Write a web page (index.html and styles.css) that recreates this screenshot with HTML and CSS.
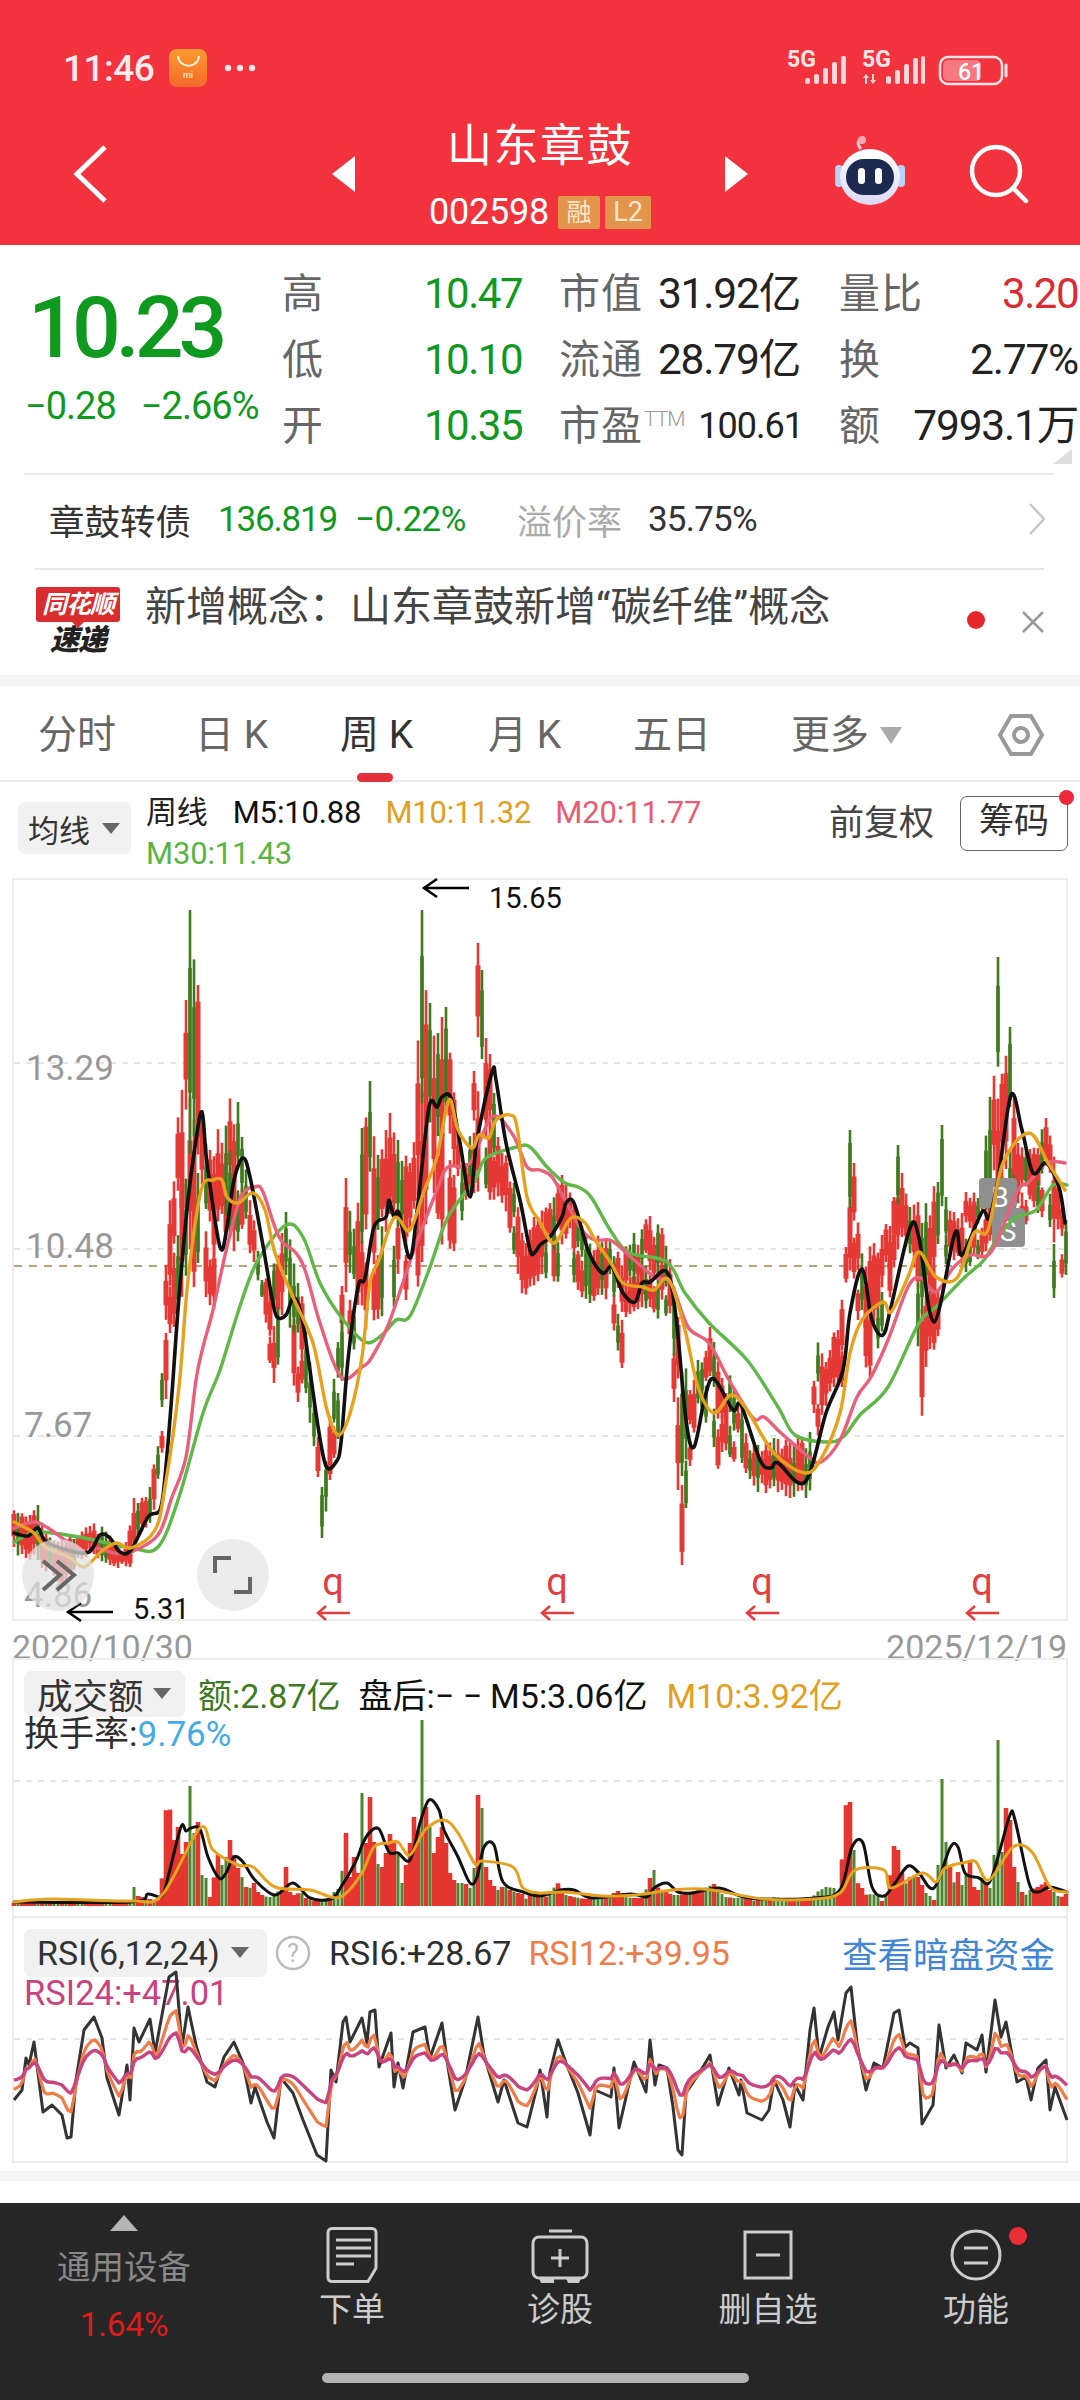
FILE: index.html
```html
<!DOCTYPE html>
<html lang="zh-CN">
<head>
<meta charset="utf-8">
<title>山东章鼓 002598</title>
<link rel="stylesheet" href="styles.css">
</head>
<body>
<div class="screen">
  <header class="header">
    <div class="status">
      <span class="time">11:46</span>
      <svg class="mi-icon" viewBox="0 0 38 38">
        <defs><linearGradient id="mi" x1="0" y1="0" x2="0" y2="1"><stop offset="0" stop-color="#fb9c30"/><stop offset="1" stop-color="#f5682b"/></linearGradient></defs>
        <rect width="38" height="38" rx="8" fill="url(#mi)"/>
        <path d="M9 7c1 13 20 13 21 0" fill="none" stroke="#fff3d8" stroke-width="2"/>
        <text x="19" y="29" class="mi-text">mi</text>
      </svg>
      <svg class="dots" viewBox="0 0 32 8"><circle cx="4" cy="4" r="3.200"/><circle cx="16" cy="4" r="3.200"/><circle cx="28" cy="4" r="3.200"/></svg>
      <svg class="sys" viewBox="0 0 224 36">
        <text x="0" y="17" class="net">5G</text>
        <g class="bars"><rect x="18" y="28" width="5" height="6" rx="2"/><rect x="27" y="24" width="5" height="10" rx="2"/><rect x="36" y="18" width="5" height="16" rx="2"/><rect x="45" y="12" width="5" height="22" rx="2"/><rect x="54" y="6" width="5" height="28" rx="2"/></g>
        <text x="75" y="17" class="net">5G</text>
        <g class="bars"><path d="M79 24l-3 4h2v6h2v-6h2zM86 34l3-4h-2v-6h-2v6h-2z"/><rect x="99" y="26" width="5" height="8" rx="2"/><rect x="108" y="20" width="5" height="14" rx="2"/><rect x="117" y="14" width="5" height="20" rx="2"/><rect x="126" y="8" width="5" height="26" rx="2"/><rect x="134" y="6" width="4" height="28" rx="2"/></g>
        <rect x="153" y="7" width="62" height="27" rx="8" class="batt"/>
        <rect x="156" y="10" width="38" height="21" rx="5" class="batt-fill"/>
        <text x="184" y="30" class="batt-text">61</text>
        <path d="M219 15v11" class="batt-cap"/>
      </svg>
    </div>
    <div class="nav">
      <svg class="back" viewBox="0 0 36 60"><path d="M33 3L5 30l28 27"/></svg>
      <div class="nav-center">
        <span class="tri-left"></span>
        <div class="titles">
          <div class="title">山东章鼓</div>
          <div class="code"><span class="code-num">002598</span><span class="tag tag-a">融</span><span class="tag tag-b">L2</span></div>
        </div>
        <span class="tri-right"></span>
      </div>
      <div class="nav-right">
        <svg class="robot" viewBox="0 0 72 72">
          <defs><linearGradient id="rb" x1="0" y1="0" x2="0" y2="1"><stop offset="0" stop-color="#ffffff"/><stop offset="1" stop-color="#dcd8f5"/></linearGradient></defs>
          <path d="M27 14c-4-4-4-10 2-11" fill="none" stroke="#f8c8d0" stroke-width="3"/>
          <circle cx="28" cy="5" r="4" fill="#f6a6b4"/>
          <rect x="1" y="30" width="8" height="22" rx="4" fill="#b8d4f8"/>
          <rect x="63" y="30" width="8" height="22" rx="4" fill="#b8d4f8"/>
          <ellipse cx="36" cy="42" rx="30" ry="28" fill="url(#rb)"/>
          <rect x="12" y="24" width="48" height="36" rx="18" fill="#1c2a52"/>
          <rect x="24" y="33" width="7" height="16" rx="3.500" fill="#fff"/>
          <rect x="41" y="33" width="7" height="16" rx="3.500" fill="#fff"/>
        </svg>
        <svg class="search" viewBox="0 0 60 60"><circle cx="27" cy="27" r="24"/><path d="M44 44l13 13"/></svg>
      </div>
    </div>
  </header>

  <section class="quote">
    <div class="price">
      <div class="price-main">10.23</div>
      <div class="price-delta"><span>−0.28</span><span>−2.66%</span></div>
    </div>
    <div class="stats">
      <div class="stat"><span class="lab">高</span><span class="val green">10.47</span></div>
      <div class="stat"><span class="lab">市值</span><span class="val">31.92亿</span></div>
      <div class="stat"><span class="lab">量比</span><span class="val red">3.20</span></div>
      <div class="stat"><span class="lab">低</span><span class="val green">10.10</span></div>
      <div class="stat"><span class="lab">流通</span><span class="val">28.79亿</span></div>
      <div class="stat"><span class="lab">换</span><span class="val">2.77%</span></div>
      <div class="stat"><span class="lab">开</span><span class="val green">10.35</span></div>
      <div class="stat"><span class="lab">市盈<sup class="ttm">TTM</sup></span><span class="val small">100.61</span></div>
      <div class="stat"><span class="lab">额</span><span class="val">7993.1万</span></div>
    </div>
    <span class="corner"></span>
  </section>

  <div class="bond">
    <span class="bond-name">章鼓转债</span>
    <span class="bond-num green b1">136.819</span>
    <span class="bond-num green b2">−0.22%</span>
    <span class="bond-lab">溢价率</span>
    <span class="bond-num b3">35.75%</span>
    <svg class="chev" viewBox="0 0 20 34"><path d="M3 2l14 15L3 32"/></svg>
  </div>

  <div class="news">
    <div class="logo"><span class="logo-top">同花顺</span><span class="logo-bottom">速递</span></div>
    <span class="news-text">新增概念：山东章鼓新增“碳纤维”概念</span>
    <span class="news-dot"></span>
    <svg class="news-x" viewBox="0 0 24 24"><path d="M2 2l20 20M22 2L2 22"/></svg>
  </div>

  <div class="band"></div>

  <nav class="tabs">
    <span class="tab t1">分时</span>
    <span class="tab t2">日 K</span>
    <span class="tab t3 active">周 K</span>
    <span class="tab t4">月 K</span>
    <span class="tab t5">五日</span>
    <span class="tab t6">更多<i class="tab-tri"></i></span>
    <svg class="hex" viewBox="0 0 46 44"><path d="M2 22L13 3h20l11 19-11 19H13z"/><circle cx="23" cy="22" r="7"/></svg>
  </nav>

  <div class="khead">
    <div class="select sel-ma"><span>均线</span><i class="sel-tri"></i></div>
    <div class="legend">
      <span class="leg-title">周线</span>
      <span class="c-black">M5:10.88</span>
      <span class="c-orange">M10:11.32</span>
      <span class="c-pink">M20:11.77</span>
      <span class="c-green">M30:11.43</span>
    </div>
    <div class="kright">
      <span class="adj">前复权</span>
      <span class="chips">筹码<i class="chips-dot"></i></span>
    </div>
  </div>

  <div class="plot">
    <svg class="canvas" width="1080" height="743" viewBox="0 878 1080 743">
      <g class="grid"><path d="M14 1063H1066M14 1249H1066M14 1436H1066"/></g>
      <path class="prev-close" d="M14 1266H1066"/>
      <text class="scale" x="26" y="1080">13.29</text>
      <text class="scale" x="26" y="1258">10.48</text>
      <text class="scale" x="24" y="1437">7.67</text>
      <text class="scale" x="24" y="1607">4.86</text>
      <g id="candles"></g>
      <g class="badge"><rect x="979" y="1178" width="38" height="30" rx="4"/><text x="1000" y="1207">B</text></g>
      <g class="badge"><rect x="992" y="1208" width="33" height="39" rx="4"/><text x="1008" y="1241">S</text></g>
      <g id="ma"></g>
      <path class="arrow" d="M469 888H424M437 879l-13 9 13 9"/>
      <text class="extreme" x="489" y="908">15.65</text>
      <path class="arrow" d="M113 1612H68M81 1603l-13 9 13 9"/>
      <text class="extreme" x="133" y="1619">5.31</text>
      <g class="mark"><text x="333" y="1595">q</text><path d="M350 1613H318M326 1606l-8 7 8 7"/></g>
      <g class="mark"><text x="557" y="1595">q</text><path d="M574 1613H542M550 1606l-8 7 8 7"/></g>
      <g class="mark"><text x="762" y="1595">q</text><path d="M779 1613H747M755 1606l-8 7 8 7"/></g>
      <g class="mark"><text x="982" y="1595">q</text><path d="M999 1613H967M975 1606l-8 7 8 7"/></g>
      <circle class="float" cx="58" cy="1575" r="36"/>
      <path class="float-ico" d="M43 1561l17 14-17 15M57 1561l17 14-17 15"/>
      <circle class="float solid" cx="233" cy="1575" r="36"/>
      <path class="float-ico" d="M215 1573v-15h16M234 1592h16v-15"/>
    </svg>
  </div>

  <div class="dates"><span>2020/10/30</span><span>2025/12/19</span></div>

  <div class="panel vol">
    <div class="vrow">
      <div class="select sel-vol"><span>成交额</span><i class="sel-tri"></i></div>
      <span class="c-dgreen vm1">额:2.87亿</span>
      <span class="c-black vm2">盘后:− −</span>
      <span class="c-black vm3">M5:3.06亿</span>
      <span class="c-orange vm4">M10:3.92亿</span>
    </div>
    <div class="vrow2"><span class="c-dark">换手率:</span><span class="c-sky">9.76%</span></div>
    <svg class="canvas" width="1080" height="258" viewBox="0 1658 1080 258">
      <g class="grid"><path d="M14 1781H1066"/></g>
      <g id="volbars"></g>
      <g id="volma"></g>
    </svg>
  </div>

  <div class="panel rsi">
    <div class="vrow">
      <div class="select sel-rsi"><span>RSI(6,12,24)</span><i class="sel-tri"></i></div>
      <svg class="help" viewBox="0 0 36 36"><circle cx="18" cy="18" r="16"/><text x="18" y="27">?</text></svg>
      <span class="c-dark rs1">RSI6:+28.67</span>
      <span class="c-rorange rs2">RSI12:+39.95</span>
      <span class="link">查看暗盘资金</span>
    </div>
    <div class="vrow2 rs3">RSI24:+47.01</div>
    <svg class="canvas" width="1080" height="247" viewBox="0 1916 1080 247">
      <g class="grid"><path d="M14 2039H1066"/></g>
      <g id="rsilines"></g>
    </svg>
  </div>

  <div class="gap-a"></div>
  <div class="band thin"></div>
  <div class="gap-b"></div>

  <footer class="footer">
    <div class="foot-row">
      <div class="sector">
        <i class="sector-tri"></i>
        <span class="sector-name">通用设备</span>
        <span class="sector-pct">1.64%</span>
      </div>
      <div class="act">
        <svg class="act-ico" width="52" height="56" viewBox="0 0 52 56"><path d="M6 1.500H46a4 4 0 0 1 4 4V41L42 54.500H6a4 4 0 0 1-4-4V5.500a4 4 0 0 1 4-4z"/><path d="M10 13H45M10 21H45M10 29H45M10 37H28"/></svg>
        <span>下单</span>
      </div>
      <div class="act">
        <svg class="act-ico" width="58" height="56" viewBox="0 0 58 56"><path d="M18 4H41"/><rect x="2" y="10" width="54" height="41" rx="6"/><path d="M29 22V40M20 31H38"/><path class="solid" d="M8 51h15v5H10zM35 51h15l-2 5H37z"/></svg>
        <span>诊股</span>
      </div>
      <div class="act">
        <svg class="act-ico" width="50" height="56" viewBox="0 0 50 56"><rect x="2" y="5" width="46" height="46"/><path d="M13 28H37"/></svg>
        <span>删自选</span>
      </div>
      <div class="act act-fn">
        <svg class="act-ico" width="52" height="56" viewBox="0 0 52 56"><circle cx="26" cy="28" r="24"/><path d="M14 21H38M14 36H38"/></svg>
        <span>功能</span>
        <i class="fn-dot"></i>
      </div>
    </div>
    <div class="home"></div>
  </footer>
</div>
<script src="chart.js"></script>
</body>
</html>
```
FILE: styles.css
```css
* { box-sizing: border-box; }
html, body { margin: 0; padding: 0; background: #fff; }
body { width: 1080px; height: 2400px; overflow: hidden; font-family: Roboto, "Noto Sans CJK SC", sans-serif; color: #333; }
i { display: block; font-style: normal; }
.screen { width: 1080px; height: 2400px; display: flex; flex-direction: column; overflow: hidden; }
.green { color: #0f9a1f; }
.red { color: #dc2b32; }

/* header */
.header { height: 245px; background: #f2323c; color: #fff; flex: none; }
.status { height: 102px; padding-top: 34px; display: flex; align-items: center; padding-left: 63px; }
.status > * { flex: none; }
.time { font-size: 37px; font-weight: 500; letter-spacing: -.5px; color: #fdeaec; height: 68px; line-height: 70px; }
.mi-icon { width: 38px; height: 38px; margin-left: 15px; }
.mi-text { font: 500 9px Roboto, sans-serif; fill: #ffe4c4; text-anchor: middle; }
.dots { width: 32px; height: 8px; margin-left: 17px; fill: #fde4e6; }
.sys { width: 224px; height: 36px; margin-left: 531px; overflow: visible; }
.net { font: 700 23px Roboto, sans-serif; fill: #fde4e6; }
.bars { fill: #fbd5d8; }
.batt { fill: none; stroke: #fde4e6; stroke-width: 2.500; }
.batt-fill { fill: #f8787f; }
.batt-text { font: 500 23px Roboto, sans-serif; fill: #fff; text-anchor: middle; }
.batt-cap { stroke: #fde4e6; stroke-width: 3; stroke-linecap: round; }

.nav { height: 143px; display: grid; grid-template-columns: 1fr auto 1fr; align-items: center; }
.back { width: 36px; height: 60px; margin-left: 72px; fill: none; stroke: #fff; stroke-width: 5; }
.nav-center { display: flex; align-items: center; gap: 74px; }
.tri-left { width: 0; height: 0; border: 18px solid transparent; border-left: 0; border-right: 23px solid #fff; }
.tri-right { width: 0; height: 0; border: 18px solid transparent; border-right: 0; border-left: 23px solid #fff; }
.titles { width: 222px; padding-top: 20px; height: 143px; display: flex; flex-direction: column; align-items: center; }
.title { font-size: 45px; line-height: 50px; letter-spacing: 1.500px; height: 50px; white-space: nowrap; }
.code { margin-top: 23px; display: flex; align-items: center; height: 34px; white-space: nowrap; }
.code-num { font-size: 36px; letter-spacing: -.2px; margin-right: 9px; }
.tag { height: 33px; line-height: 33px; text-align: center; background: #e4954c; color: #fde7cf; font-size: 25px; border-radius: 2px; }
.tag-a { width: 42px; margin-right: 5px; }
.tag-b { width: 46px; font-size: 27px; }
.nav-right { display: flex; align-items: center; justify-content: flex-end; padding-right: 51px; }
.robot { width: 72px; height: 72px; margin-bottom: 6px; }
.search { width: 60px; height: 60px; margin-left: 63px; fill: none; stroke: #fff; stroke-width: 4.500; stroke-linecap: round; }

/* quote */
.quote { position: relative; height: 228px; flex: none; display: flex; }
.price { width: 282px; flex: none; }
.price-main { margin: 43px 0 0 28px; font-size: 86px; line-height: 80px; height: 80px; font-weight: 500; letter-spacing: -5px; color: #0f9a1f; }
.price-delta { margin: 16px 0 0 25px; display: flex; gap: 25px; font-size: 38px; line-height: 44px; letter-spacing: -1px; color: #0f9a1f; white-space: nowrap; }
.stats { flex: 1; margin-top: 16px; display: grid; grid-template-columns: 240px 241px 241px; column-gap: 37px; grid-auto-rows: 66px; align-content: start; }
.stat { display: flex; align-items: center; justify-content: space-between; white-space: nowrap; min-width: 0; }
.stat:nth-child(3n) { margin-left: 2px; }
.lab { font-size: 41px; line-height: 50px; color: #666; font-weight: 400; letter-spacing: 1px; }
.ttm { font-size: 21px; line-height: 20px; color: #999; vertical-align: 14px; font-weight: 300; letter-spacing: -1px; margin-left: 1px; }
.val { font-size: 42.500px; line-height: 50px; letter-spacing: -1.200px; color: #222; font-weight: 400; }
.val.green { color: #0f9a1f; font-size: 42px; letter-spacing: -1.500px; }
.val.red { color: #dc2b32; font-size: 42px; letter-spacing: -1.500px; }
.val.small { font-size: 36px; letter-spacing: -1px; margin-right: -3px; }
.corner { position: absolute; left: 1053px; top: 204px; width: 0; height: 0; border-style: solid; border-width: 0 0 15px 19px; border-color: transparent transparent #dedede transparent; }

.bond { flex: none; height: 95px; margin: 0 27px 0 24px; border-top: 2px solid #e8e8e8; display: flex; align-items: center; padding: 0 0 5px 25px; white-space: nowrap; }
.bond-name { font-size: 35.500px; color: #333; width: 169px; }
.bond-num { font-size: 35px; letter-spacing: -1.200px; }
.b1 { width: 137px; }
.b2 { width: 162px; letter-spacing: -.5px; }
.bond-lab { font-size: 35px; color: #aaa; width: 131px; }
.b3 { color: #333; letter-spacing: -.8px; }
.chev { width: 20px; height: 34px; margin-left: auto; margin-right: 6px; fill: none; stroke: #c6c6c6; stroke-width: 2.500; }

.news { flex: none; height: 107px; display: flex; position: relative; }
.news::before { content: ""; position: absolute; left: 35px; top: 0; width: 1009px; height: 2px; background: #e8e8e8; }
.logo { margin: 19px 0 0 36px; width: 84px; display: flex; flex-direction: column; align-items: center; flex: none; }
.logo-top { position: relative; width: 84px; height: 35px; line-height: 35px; background: #d92c2e; border-radius: 3px; color: #fff; text-align: center; font-size: 25px; font-weight: 700; font-style: italic; letter-spacing: -1px; }
.logo-top::after { content: ""; position: absolute; left: 36px; top: 35px; border: 6px solid transparent; border-top-color: #d92c2e; border-bottom: 0; }
.logo-bottom { font-size: 29px; line-height: 33px; font-weight: 900; font-style: italic; color: #222; margin-top: 2px; letter-spacing: -1px; }
.news-text { margin: 14px 0 0 25px; font-size: 41px; line-height: 50px; color: #444; white-space: nowrap; flex: none; width: 790px; }
.news-dot { position: absolute; left: 967px; top: 43px; width: 18px; height: 18px; border-radius: 50%; background: #e8262d; }
.news-x { position: absolute; left: 1021px; top: 42px; width: 24px; height: 24px; fill: none; stroke: #999; stroke-width: 2.500; }

.band { flex: none; height: 11px; background: #f4f4f4; }
.band.thin { height: 10px; }

/* tabs */
.tabs { flex: none; height: 96px; display: flex; align-items: center; padding: 4px 0 0 38px; border-bottom: 2px solid #e9e9e9; position: relative; }
.tab { font-size: 39px; line-height: 50px; color: #666; white-space: nowrap; flex: none; }
.t1 { width: 157px; }
.t2 { width: 145px; }
.t3 { width: 148px; }
.t4 { width: 145px; }
.t5 { width: 158px; }
.t6 { display: flex; align-items: center; }
.tab.active { color: #333; position: relative; }
.tab.active::after { content: ""; position: absolute; left: 17px; top: 63px; width: 36px; height: 9px; border-radius: 5px; background: #e4303a; }
.tab-tri { margin-left: 11px; width: 0; height: 0; border-style: solid; border-width: 17px 11px 0; border-color: #aaa transparent transparent; }
.hex { width: 46px; height: 44px; margin-left: auto; margin-right: 36px; fill: none; stroke: #999; stroke-width: 4; }

/* k header */
.khead { flex: none; height: 96px; display: flex; align-items: flex-start; padding-left: 18px; position: relative; }
.select { background: #f1f1f1; border-radius: 7px; display: flex; align-items: center; flex: none; white-space: nowrap; color: #333; }
.sel-tri { width: 0; height: 0; border-style: solid; border-width: 11px 9px 0; border-color: #666 transparent transparent; }
.sel-ma { width: 113px; height: 52px; margin-top: 20px; padding-left: 10px; font-size: 31px; }
.sel-ma .sel-tri { margin-left: 12px; }
.legend { margin: 10px 0 0 15px; width: 560px; display: flex; flex-wrap: wrap; column-gap: 24px; font-size: 31px; line-height: 41px; letter-spacing: -.15px; }
.leg-title { color: #222; margin-right: 1px; }
.c-black { color: #111; }
.c-orange { color: #e2a022; }
.c-pink { color: #ea5a72; }
.c-green { color: #58b543; }
.c-dgreen { color: #3e7a1f; }
.c-dark { color: #2e2e2e; }
.c-sky { color: #46aae6; }
.c-rorange { color: #ee7d4a; }
.kright { margin-left: auto; display: flex; align-items: center; gap: 26px; padding-right: 12px; margin-top: 14px; }
.adj { font-size: 35px; color: #444; line-height: 55px; }
.chips { position: relative; width: 108px; height: 55px; border: 1.500px solid #666; border-radius: 7px; font-size: 35px; line-height: 50px; text-align: center; color: #333; }
.chips-dot { position: absolute; right: -7px; top: -7px; width: 15px; height: 15px; border-radius: 50%; background: #f0283a; }

/* charts */
.plot { flex: none; position: relative; height: 743px; margin: 0 12px; border: 2px solid #ececec; }
.plot .canvas { left: -14px; top: -2px; }
.canvas { position: absolute; display: block; overflow: visible; }
.grid path { fill: none; stroke: #ddd; stroke-width: 1.500; stroke-dasharray: 6 6; }
.prev-close { fill: none; stroke: #bca27c; stroke-width: 2; stroke-dasharray: 8 7; }
.scale { font: 400 35px Roboto, sans-serif; fill: #999; }
.badge rect { fill: #8f8f8f; }
.badge text { font: 400 28px Roboto, sans-serif; fill: #fff; text-anchor: middle; }
.arrow { fill: none; stroke: #000; stroke-width: 2.500; }
.extreme { font: 400 29px Roboto, sans-serif; fill: #111; }
.mark text { font: 400 38px Roboto, sans-serif; fill: #e53d3d; text-anchor: middle; }
.mark path { fill: none; stroke: #e53d3d; stroke-width: 2.500; }
.float { fill: #e0e0e0; fill-opacity: .72; }
.float.solid { fill: #ececec; fill-opacity: 1; }
.float-ico { fill: none; stroke: #666; stroke-width: 4; }

.dates { flex: none; height: 37px; display: flex; justify-content: space-between; padding: 10px 13px 0 12px; font-size: 34px; line-height: 32px; color: #999; }

.panel { flex: none; position: relative; margin: 0 12px; border: 2px solid #ececec; border-bottom: 0; font-size: 34px; white-space: nowrap; }
.panel .canvas { left: -14px; top: -2px; }
.vol { height: 258px; padding: 9px 0 0 10px; }
.rsi { height: 247px; border-bottom: 2px solid #ececec; padding: 9px 0 0 10px; }
.vrow { display: flex; align-items: center; }
.sel-vol { width: 161px; height: 46px; padding-left: 13px; font-size: 35.500px; }
.sel-vol .sel-tri { margin-left: 9px; }
.vm1 { margin-left: 13px; }
.vm2 { margin-left: 18px; }
.vm3 { margin-left: 8px; }
.vm4 { margin-left: 19px; }
.vrow2 { margin: -2px 0 0 0; line-height: 38px; font-size: 35px; }
.sel-rsi { width: 243px; height: 48px; padding-left: 13px; font-size: 34px; }
.sel-rsi .sel-tri { margin-left: 11px; }
.help { width: 36px; height: 36px; margin-left: 8px; fill: none; stroke: #bbb; stroke-width: 2.500; flex: none; }
.help text { font: 400 25px Roboto, sans-serif; fill: #bbb; stroke: none; text-anchor: middle; }
.rs1 { margin-left: 18px; font-size: 34px; }
.rs2 { margin-left: 17px; font-size: 34px; }
.link { margin-left: auto; padding-right: 11px; color: #3f86d8; font-size: 35.500px; }
.rs3 { color: #c8437f; margin-top: -3px; line-height: 36px; font-size: 34.500px; }

.gap-a { flex: none; height: 8px; }
.gap-b { flex: none; height: 22px; }

/* footer */
.footer { flex: 1; background: #262626; color: #ccc; display: flex; flex-direction: column; }
.foot-row { height: 170px; display: grid; grid-template-columns: 248px repeat(4, 208px); flex: none; }
.sector { display: flex; flex-direction: column; align-items: center; padding-top: 12px; }
.sector-tri { width: 0; height: 0; border-style: solid; border-width: 0 14px 16px; border-color: transparent transparent #b5b5b5; }
.sector-name { margin-top: 15px; font-size: 33.500px; line-height: 44px; color: #888; }
.sector-pct { margin-top: 15px; font-size: 33.500px; line-height: 40px; color: #e01b1b; letter-spacing: -.3px; }
.act { position: relative; display: flex; flex-direction: column; align-items: center; padding-top: 24px; font-size: 33px; line-height: 40px; }
.act span { margin-top: 7px; }
.act-ico { fill: none; stroke: #ccc; stroke-width: 3; flex: none; }
.act-ico .solid { fill: #ccc; stroke: none; }
.fn-dot { position: absolute; left: 137px; top: 24px; width: 18px; height: 18px; border-radius: 50%; background: #ea2f36; }
.home { width: 427px; height: 10px; margin-left: 322px; border-radius: 5px; background: #b3b3b3; flex: none; }
```
FILE: chart.js
```js
(function () {
  var NS = 'http://www.w3.org/2000/svg';
  function el(parent, name, attrs) {
    var n = document.createElementNS(NS, name);
    for (var k in attrs) n.setAttribute(k, attrs[k]);
    parent.appendChild(n);
    return n;
  }
  var seed = 20251219;
  function rnd() {
    seed = (seed * 1664525 + 1013904223) % 4294967296;
    return seed / 4294967296;
  }
  function unpack(a) {
    var o = [];
    for (var i = 0; i < a.length; i += 2) o.push([a[i], a[i + 1]]);
    return o;
  }
  function interp(pts, x) {
    if (x <= pts[0][0]) return pts[0][1];
    for (var i = 1; i < pts.length; i++) {
      if (x <= pts[i][0]) {
        var a = pts[i - 1], b = pts[i];
        return a[1] + (b[1] - a[1]) * (x - a[0]) / (b[0] - a[0] || 1);
      }
    }
    return pts[pts.length - 1][1];
  }
  function nearKey(pts, x, d) {
    for (var i = 0; i < pts.length; i++) if (Math.abs(pts[i][0] - x) <= d) return true;
    return false;
  }
  function smooth(pts) {
    var d = 'M' + pts[0][0] + ' ' + pts[0][1];
    for (var i = 0; i < pts.length - 1; i++) {
      var p0 = pts[i - 1] || pts[i], p1 = pts[i], p2 = pts[i + 1], p3 = pts[i + 2] || p2;
      var c1x = p1[0] + (p2[0] - p0[0]) / 6, c1y = p1[1] + (p2[1] - p0[1]) / 6;
      var c2x = p2[0] - (p3[0] - p1[0]) / 6, c2y = p2[1] - (p3[1] - p1[1]) / 6;
      d += 'C' + c1x.toFixed(1) + ' ' + c1y.toFixed(1) + ' ' + c2x.toFixed(1) + ' ' + c2y.toFixed(1) + ' ' + p2[0] + ' ' + p2[1];
    }
    return d;
  }
  function line(parent, pts, color, w) {
    el(parent, 'path', { d: smooth(pts), fill: 'none', stroke: color, 'stroke-width': w, 'stroke-linejoin': 'round', 'stroke-linecap': 'round' });
  }

  var RED = '#e53935', GREEN = '#3f7a1e';

  /* candlestick envelope traced from the weekly chart */
  var hi = unpack([13,1510,30,1515,38,1505,45,1533,62,1540,93,1523,103,1527,124,1553,134,1498,148,1492,160,1433,165,1283,169,1210,177,1132,186,1000,190,910,198,985,202,1110,210,1150,217,1132,229,1098,238,1102,241,1130,253,1213,262,1280,272,1270,286,1212,293,1260,301,1288,313,1387,319,1447,322,1487,331,1407,341,1313,346,1178,355,1235,362,1128,370,1081,377,1158,386,1130,390,1113,398,1140,410,1163,415,1137,422,910,430,1003,437,1037,442,1017,446,1007,455,1103,463,1177,473,1103,478,943,482,970,486,1038,491,1058,498,1137,504,1143,516,1190,523,1240,534,1217,539,1217,560,1168,569,1190,586,1233,612,1238,617,1253,649,1215,662,1228,671,1263,678,1317,690,1390,698,1360,710,1327,714,1342,726,1393,729,1373,743,1407,748,1447,774,1438,798,1435,810,1432,817,1340,826,1362,833,1333,838,1330,845,1277,848,1187,850,1130,854,1163,860,1250,880,1240,894,1197,898,1145,902,1173,910,1207,918,1202,938,1182,941,1107,946,1197,959,1220,966,1192,981,1190,992,1063,998,957,1003,1103,1007,1040,1010,1027,1018,1143,1035,1148,1046,1118,1051,1140,1055,1162,1065,1220]);
  var lo = unpack([14,1547,17,1555,41,1567,62,1587,86,1557,117,1568,131,1567,138,1535,152,1525,164,1443,166,1399,170,1333,188,1307,206,1297,213,1313,224,1260,251,1253,262,1297,270,1363,274,1383,279,1360,298,1402,306,1393,309,1417,315,1452,318,1477,322,1538,327,1505,339,1433,344,1380,365,1330,394,1307,406,1300,455,1250,470,1197,503,1203,523,1298,539,1280,547,1278,590,1303,605,1295,622,1368,626,1317,650,1307,659,1320,673,1317,674,1402,678,1490,682,1565,686,1508,692,1447,705,1418,717,1473,722,1452,746,1473,758,1492,766,1493,790,1498,806,1498,812,1487,819,1427,833,1387,843,1387,852,1258,858,1320,865,1365,871,1380,884,1323,891,1293,902,1237,915,1270,921,1428,926,1367,933,1353,939,1333,950,1257,967,1273,988,1250,1022,1243,1032,1208,1050,1227,1054,1298,1067,1273]);
  var forcedGreen = [190,362,377,398,422,430,446,482,322,941,998,1010,682,714,817,921,206,238,262,298,309,674];
  function isForced(x, list) {
    for (var i = 0; i < list.length; i++) if (Math.abs(list[i] - x) <= 1.5) return true;
    return false;
  }
  var queue = [];
  function candle(x, top, bottom, color) {
    var span = bottom - top;
    queue.push({
      x: x, top: top, span: span, color: color,
      bodyTop: top + span * (0.08 + rnd() * 0.22),
      bodyBot: bottom - span * (0.08 + rnd() * 0.22)
    });
  }
  function paint(c, g) {
    el(g, 'rect', { x: c.x - 1.3, y: c.top.toFixed(1), width: 2.6, height: c.span.toFixed(1), fill: c.color });
    var w = c.color === RED ? 5 : 3.6;
    el(g, 'rect', { x: c.x - w / 2, y: c.bodyTop.toFixed(1), width: w, height: Math.max(2, c.bodyBot - c.bodyTop).toFixed(1), fill: c.color });
  }
  for (var x = 14; x <= 1066; x += 4) {
    var h = interp(hi, x), l = interp(lo, x), span = l - h;
    var keyH = nearKey(hi, x, 1.5), keyL = nearKey(lo, x, 1.5);
    var topH = h + (keyH ? 0 : rnd() * rnd() * span * 0.3);
    var botL = l - (keyL ? 0 : rnd() * rnd() * span * 0.3);
    var colorA = isForced(x, forcedGreen) || rnd() < 0.3 ? GREEN : RED;
    if (span < 70) {
      candle(x, topH, botL, colorA);
    } else {
      candle(x, topH, topH + span * (0.35 + rnd() * 0.3), colorA);
      if (keyL || rnd() < 0.7) {
        candle(x, botL - span * (0.25 + rnd() * 0.3), botL, rnd() < 0.32 ? GREEN : RED);
      }
    }
  }
  var cg = document.getElementById('candles');
  queue.filter(function (c) { return c.color === RED; }).forEach(function (c) { paint(c, cg); });
  queue.filter(function (c) { return c.color === GREEN; }).forEach(function (c) {
    var w = c.bodyBot - c.bodyTop;
    c.bodyTop += w * 0.1;
    paint(c, cg);
  });

  /* moving averages */
  var m5 = unpack([14,1533,28,1536,38,1528,48,1543,86,1553,100,1535,110,1538,120,1552,131,1550,148,1517,160,1510,165,1477,172,1393,179,1297,188,1200,195,1147,202,1112,207,1163,220,1247,227,1227,234,1180,243,1158,250,1177,262,1240,272,1298,277,1317,286,1315,294,1298,303,1323,317,1420,326,1466,336,1462,341,1443,348,1360,358,1287,365,1278,374,1227,386,1217,389,1200,394,1217,399,1213,410,1258,418,1203,429,1107,437,1107,442,1097,451,1098,460,1143,470,1197,477,1140,492,1072,496,1080,506,1143,520,1200,530,1250,535,1252,540,1245,550,1237,562,1217,566,1203,574,1203,588,1250,602,1273,612,1267,623,1293,635,1302,642,1283,650,1282,667,1272,676,1317,686,1420,694,1447,705,1397,714,1379,733,1410,741,1405,760,1460,771,1468,778,1463,805,1482,826,1413,843,1370,850,1313,862,1269,872,1320,883,1335,891,1307,910,1228,919,1238,934,1322,955,1233,962,1255,982,1212,989,1218,998,1180,1011,1095,1022,1130,1033,1173,1046,1163,1059,1187,1065,1223]);
  var m10 = unpack([14,1522,34,1533,45,1547,69,1557,84,1567,103,1550,117,1543,131,1548,155,1530,165,1487,179,1387,188,1280,201,1191,213,1180,222,1180,227,1197,238,1203,253,1193,265,1210,275,1253,293,1297,313,1343,327,1410,339,1435,351,1410,362,1357,370,1283,379,1260,391,1223,398,1218,410,1230,424,1191,437,1157,449,1100,458,1130,472,1148,479,1135,489,1138,496,1120,510,1115,517,1127,527,1197,540,1222,554,1243,571,1218,585,1223,595,1240,611,1263,623,1283,643,1287,654,1290,669,1280,685,1330,698,1387,714,1413,731,1395,747,1410,774,1453,805,1473,822,1457,840,1413,850,1353,862,1320,883,1302,891,1312,908,1277,919,1252,936,1277,957,1278,974,1233,988,1230,1003,1163,1029,1133,1048,1163,1065,1190]);
  var m20 = unpack([14,1528,34,1522,48,1528,69,1543,86,1553,96,1548,114,1553,131,1552,158,1535,172,1497,186,1457,196,1380,203,1347,213,1310,227,1247,241,1197,255,1187,263,1192,279,1237,296,1253,306,1273,320,1323,341,1377,362,1367,372,1357,389,1323,413,1253,437,1190,448,1167,470,1163,492,1117,513,1135,527,1167,540,1170,552,1177,565,1200,582,1230,595,1240,612,1241,634,1260,656,1278,671,1283,688,1327,709,1343,729,1380,753,1418,764,1417,781,1433,809,1457,821,1462,840,1440,857,1397,871,1377,888,1340,908,1287,921,1278,936,1292,953,1268,970,1255,991,1252,1017,1192,1029,1182,1046,1163,1059,1162,1065,1163]);
  var m30 = unpack([14,1542,38,1532,84,1538,131,1548,158,1547,179,1497,203,1413,220,1370,241,1303,258,1260,286,1225,303,1237,320,1283,341,1317,365,1342,382,1335,396,1320,410,1316,430,1267,448,1217,475,1180,486,1158,517,1147,530,1147,547,1167,565,1183,578,1187,591,1197,612,1233,630,1253,667,1262,685,1293,709,1323,747,1360,778,1407,795,1435,826,1442,843,1437,860,1415,888,1387,919,1323,936,1307,964,1278,984,1260,998,1237,1015,1218,1036,1210,1053,1185,1067,1185]);
  var mg = document.getElementById('ma');
  line(mg, m30, '#5fb848', 3.4);
  line(mg, m20, '#e8607a', 3.4);
  line(mg, m5, '#111111', 3.6);
  line(mg, m10, '#e6a21e', 3.4);

  /* volume */
  var vol = unpack([13,1903,60,1902,100,1903,131,1902,134,1887,138,1896,145,1898,155,1900,161,1900,165,1813,169,1802,174,1840,177,1817,181,1857,186,1842,190,1786,194,1833,198,1822,202,1875,206,1878,210,1897,213,1883,218,1855,222,1865,226,1857,230,1840,234,1855,238,1868,242,1877,246,1887,250,1888,254,1883,258,1892,262,1895,267,1897,272,1897,277,1892,282,1890,286,1867,290,1892,294,1895,301,1892,306,1898,313,1901,322,1901,329,1900,334,1892,341,1887,345,1822,350,1877,354,1857,358,1873,362,1793,366,1843,370,1797,374,1842,378,1864,382,1867,386,1853,390,1834,394,1843,398,1855,402,1883,406,1865,410,1843,414,1817,418,1830,422,1720,426,1807,430,1827,434,1853,438,1837,442,1827,446,1843,450,1873,454,1880,458,1883,462,1883,466,1884,470,1888,474,1868,478,1795,482,1808,486,1867,490,1880,494,1886,497,1891,501,1887,506,1887,510,1890,515,1892,522,1894,525,1900,529,1895,534,1893,540,1893,545,1897,550,1895,557,1882,561,1887,566,1895,573,1897,585,1899,593,1898,605,1898,614,1893,618,1891,624,1897,633,1898,643,1898,650,1878,654,1870,659,1892,666,1892,673,1895,681,1895,692,1892,705,1888,714,1884,719,1892,726,1897,735,1898,747,1898,753,1901,774,1897,788,1899,809,1901,817,1892,826,1887,834,1888,840,1895,845,1806,850,1802,854,1850,857,1882,862,1888,865,1895,871,1894,879,1895,883,1903,888,1890,894,1846,898,1850,902,1873,905,1885,910,1877,917,1875,921,1883,926,1893,929,1895,934,1900,938,1865,942,1779,946,1842,950,1865,953,1885,958,1872,962,1885,966,1873,970,1862,974,1887,978,1890,982,1878,986,1883,990,1888,994,1855,998,1740,1002,1852,1006,1808,1010,1820,1014,1867,1018,1882,1024,1897,1030,1890,1038,1887,1046,1882,1050,1890,1054,1892,1058,1896,1063,1897,1067,1893]);
  var volGreen = [190,194,202,206,362,226,422,482,942,998,1002,946,854,726,654,342,378,398];
  var vg = document.getElementById('volbars');
  for (var vx = 14; vx <= 1066; vx += 4) {
    var top = interp(vol, vx), ht = 1906 - top;
    var green = isForced(vx, volGreen) ? true : (isForced(vx, [165,169,177,198,345,370,390,414,478,845,850,894,1006,970]) ? false : rnd() > 0.45 + Math.min(ht, 60) * 0.007);
    var w = green ? 3 : 4.6;
    el(vg, 'rect', { x: vx - w / 2, y: top.toFixed(1), width: w, height: ht.toFixed(1), fill: green ? '#4c8430' : '#e5352f' });
  }
  var v5 = unpack([14,1902,131,1902,148,1894,162,1896,169,1873,181,1827,186,1831,191,1828,200,1829,208,1857,219,1878,226,1873,234,1857,243,1862,255,1880,275,1895,293,1883,310,1898,331,1899,341,1887,355,1863,363,1843,370,1832,379,1829,389,1852,398,1853,410,1860,420,1823,429,1800,439,1810,444,1830,458,1857,470,1883,477,1877,484,1847,494,1845,503,1882,523,1892,540,1896,561,1890,574,1890,592,1898,630,1894,647,1897,654,1888,667,1883,678,1892,692,1893,719,1888,740,1896,760,1899,815,1898,840,1890,852,1847,863,1843,872,1887,884,1896,895,1883,908,1866,919,1873,934,1888,950,1848,958,1847,965,1873,979,1878,989,1883,998,1857,1010,1815,1015,1820,1029,1883,1038,1892,1050,1887,1067,1892]);
  var v10 = unpack([14,1902,52,1899,131,1901,162,1895,200,1828,213,1850,238,1865,253,1867,275,1887,310,1890,331,1897,344,1895,362,1873,374,1847,389,1843,398,1842,410,1855,425,1830,444,1820,458,1833,475,1864,482,1861,513,1867,523,1888,540,1893,564,1892,602,1896,636,1895,664,1891,685,1889,712,1890,764,1899,815,1899,840,1893,855,1870,884,1870,891,1888,922,1873,936,1882,945,1868,967,1862,976,1862,989,1880,1013,1847,1032,1852,1050,1887,1067,1892]);
  var vm = document.getElementById('volma');
  line(vm, v5, '#111111', 3);
  line(vm, v10, '#e6a21e', 3);

  /* RSI */
  var rsi6 = unpack([14,2100,22,2090,26,2058,29,2065,34,2042,43,2112,52,2105,62,2115,67,2138,71,2137,76,2080,84,2030,94,2017,102,2038,107,2078,119,2115,127,2065,130,2100,134,2028,139,2042,150,2019,155,2053,169,1977,176,1972,182,2047,188,2007,196,2045,207,2082,215,2087,224,2057,234,2042,243,2063,251,2103,255,2087,267,2122,274,2138,281,2078,293,2093,303,2120,317,2155,326,2161,331,2070,336,2082,343,2022,346,2017,350,2042,362,2018,367,2043,370,2012,375,2010,379,2067,391,2033,394,2087,398,2063,403,2088,413,2032,425,2027,430,2058,442,2023,448,2067,455,2110,465,2080,478,2017,484,2055,498,2102,504,2080,518,2123,527,2127,537,2087,540,2070,547,2117,550,2072,558,2040,566,2063,578,2093,590,2135,595,2090,611,2097,614,2068,619,2128,634,2062,646,2092,650,2040,655,2085,659,2065,667,2068,673,2107,678,2150,682,2155,686,2093,700,2072,710,2055,718,2105,729,2068,739,2095,741,2080,747,2113,762,2120,769,2110,774,2080,783,2100,790,2127,795,2085,803,2100,810,2030,814,2008,819,2058,828,2027,834,2012,838,2040,846,1993,851,1987,857,2043,866,2090,874,2063,883,2068,894,2013,899,2010,905,2047,910,2043,918,2048,922,2124,933,2105,939,2025,946,2068,954,2055,962,2073,966,2043,977,2050,982,2035,986,2072,995,2000,1001,2037,1006,2022,1017,2082,1026,2077,1031,2100,1038,2068,1046,2060,1050,2110,1055,2087,1067,2120]);
  function derive(center, gain, alpha) {
    var out = [], v = null;
    for (var x = 14; x <= 1067; x += 3) {
      var t = center + gain * (interp(rsi6, x) - center);
      v = v === null ? t : v + alpha * (t - v);
      out.push([x, +v.toFixed(1)]);
    }
    return out;
  }
  function poly(parent, pts, color, w) {
    el(parent, 'polyline', { points: pts.map(function (p) { return p.join(','); }).join(' '), fill: 'none', stroke: color, 'stroke-width': w, 'stroke-linejoin': 'round' });
  }
  var rg = document.getElementById('rsilines');
  poly(rg, rsi6, '#333333', 3);
  poly(rg, derive(2072, 0.62, 0.7), '#ee7d4a', 3.2);
  poly(rg, derive(2068, 0.38, 0.55), '#c8437f', 3.4);
})();
```
